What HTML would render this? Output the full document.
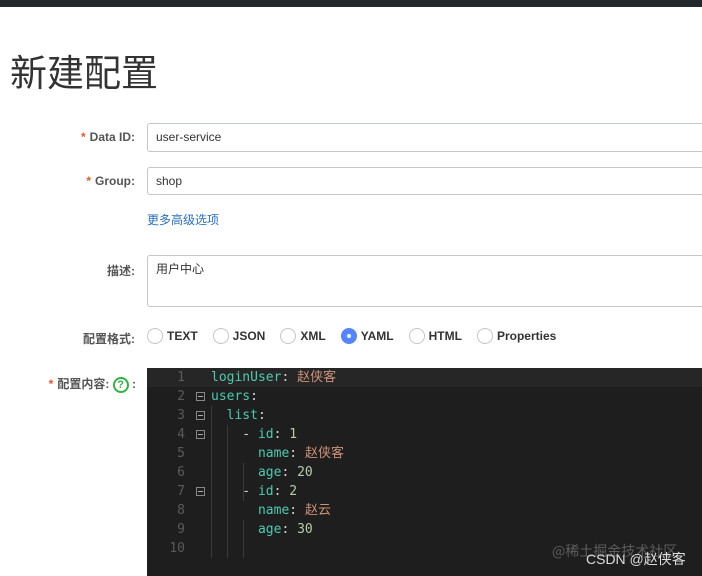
<!DOCTYPE html>
<html><head><meta charset="utf-8"><style>
*{margin:0;padding:0;box-sizing:border-box}
body{width:702px;height:576px;overflow:hidden;background:#fff;position:relative;font-family:"Liberation Sans","Noto Sans CJK SC",sans-serif}
.top{position:absolute;left:0;top:0;width:702px;height:7px;background:#23272e}
.title{position:absolute;left:10px;top:43px;font-size:37px;color:#333;font-family:"Noto Sans CJK SC",sans-serif;font-weight:400}
.lbl{position:absolute;right:567px;font-size:12px;font-weight:bold;color:#555;white-space:nowrap;font-family:"Liberation Sans","Noto Sans CJK SC",sans-serif}
.lbl i{color:#e8562a;font-style:normal;margin-right:4px}
.inp{position:absolute;left:147px;width:570px;border:1px solid #c4c6cf;border-radius:3px;font-size:12px;color:#333;padding-left:8px}
.link{position:absolute;left:147px;top:211px;font-size:12px;color:#2a6fc4;font-family:"Noto Sans CJK SC",sans-serif}
.radios{position:absolute;left:147px;top:328px;font-size:12px;font-weight:bold;color:#333;display:flex;align-items:center;height:16px}
.r{display:flex;align-items:center;margin-right:15px}
.c{width:16px;height:16px;border:1px solid #c4c6cf;border-radius:50%;margin-right:4px;background:#fff}
.c.on{background:#5584ff;border-color:#5584ff;position:relative}
.c.on:after{content:"";position:absolute;left:5px;top:5px;width:4px;height:4px;border-radius:50%;background:#fff}
.ed{position:absolute;left:147px;top:368px;width:555px;height:208px;background:#1e1e1e;font-family:"DejaVu Sans Mono","Noto Sans CJK SC",monospace;font-size:13px}
.ln{position:absolute;left:0;width:38px;text-align:right;color:#5a5a5a;height:19px;line-height:19px}
.code{position:absolute;left:64px;height:19px;line-height:19px;color:#fff;white-space:pre}
.k{color:#4ec9b0}.s{color:#ce9178}.n{color:#b5cea8}.p{color:#d4d4d4}
.fold{position:absolute;left:49px;width:9px;height:9px;border:1px solid #888}
.fold:after{content:"";position:absolute;left:1px;top:3px;width:5px;height:1px;background:#aaa}
.g{position:absolute;width:1px;background:#3a3a3a}
.wm1{position:absolute;left:552px;top:541px;font-size:14px;color:#5d5d5d;font-family:"Noto Sans CJK SC",sans-serif}
.wm2{position:absolute;left:586px;top:549px;font-size:14px;color:#ddd;font-family:"Liberation Sans","Noto Sans CJK SC",sans-serif}
</style></head><body>
<div class="top"></div>
<div class="title">新建配置</div>
<div class="lbl" style="top:130px"><i>*</i>Data ID:</div>
<div class="inp" style="top:123px;height:29px;line-height:27px">user-service</div>
<div class="lbl" style="top:174px"><i>*</i>Group:</div>
<div class="inp" style="top:167px;height:28px;line-height:26px">shop</div>
<div class="link">更多高级选项</div>
<div class="lbl" style="top:262px">描述:</div>
<div class="inp" style="top:255px;height:52px;line-height:26px;padding-top:0">用户中心</div>
<div class="lbl" style="top:330px">配置格式:</div>
<div class="radios">
<div class="r"><span class="c"></span>TEXT</div>
<div class="r"><span class="c"></span>JSON</div>
<div class="r"><span class="c"></span>XML</div>
<div class="r"><span class="c on"></span>YAML</div>
<div class="r"><span class="c"></span>HTML</div>
<div class="r"><span class="c"></span>Properties</div>
</div>
<div class="lbl" style="top:375px;right:566px"><i>*</i>配置内容: <span style="display:inline-block;width:16px;height:16px;border:2px solid #2fb344;border-radius:50%;color:#2fb344;font-size:11px;line-height:12px;text-align:center;vertical-align:middle">?</span> :</div>
<div class="ed">
<div style="position:absolute;left:0;top:0;width:555px;height:19px;background:#262626"></div>
<div class="g" style="left:64px;top:38px;height:152px"></div>
<div class="g" style="left:80px;top:57px;height:133px"></div>
<div class="g" style="left:96px;top:95px;height:38px"></div>
<div class="g" style="left:96px;top:152px;height:38px"></div>
<div class="ln" style="top:0">1</div><div class="ln" style="top:19px">2</div><div class="ln" style="top:38px">3</div><div class="ln" style="top:57px">4</div><div class="ln" style="top:76px">5</div><div class="ln" style="top:95px">6</div><div class="ln" style="top:114px">7</div><div class="ln" style="top:133px">8</div><div class="ln" style="top:152px">9</div><div class="ln" style="top:171px">10</div>
<div class="fold" style="top:24px"></div><div class="fold" style="top:43px"></div><div class="fold" style="top:62px"></div><div class="fold" style="top:119px"></div>
<div class="code" style="top:0"><span class="k">loginUser</span><span class="p">: </span><span class="s">赵侠客</span></div>
<div class="code" style="top:19px"><span class="k">users</span><span class="p">:</span></div>
<div class="code" style="top:38px"><span class="k">  list</span><span class="p">:</span></div>
<div class="code" style="top:57px"><span class="p">    - </span><span class="k">id</span><span class="p">: </span><span class="n">1</span></div>
<div class="code" style="top:76px"><span class="k">      name</span><span class="p">: </span><span class="s">赵侠客</span></div>
<div class="code" style="top:95px"><span class="k">      age</span><span class="p">: </span><span class="n">20</span></div>
<div class="code" style="top:114px"><span class="p">    - </span><span class="k">id</span><span class="p">: </span><span class="n">2</span></div>
<div class="code" style="top:133px"><span class="k">      name</span><span class="p">: </span><span class="s">赵云</span></div>
<div class="code" style="top:152px"><span class="k">      age</span><span class="p">: </span><span class="n">30</span></div>
</div>
<div class="wm1">@稀土掘金技术社区</div>
<div class="wm2">CSDN @赵侠客</div>
</body></html>
